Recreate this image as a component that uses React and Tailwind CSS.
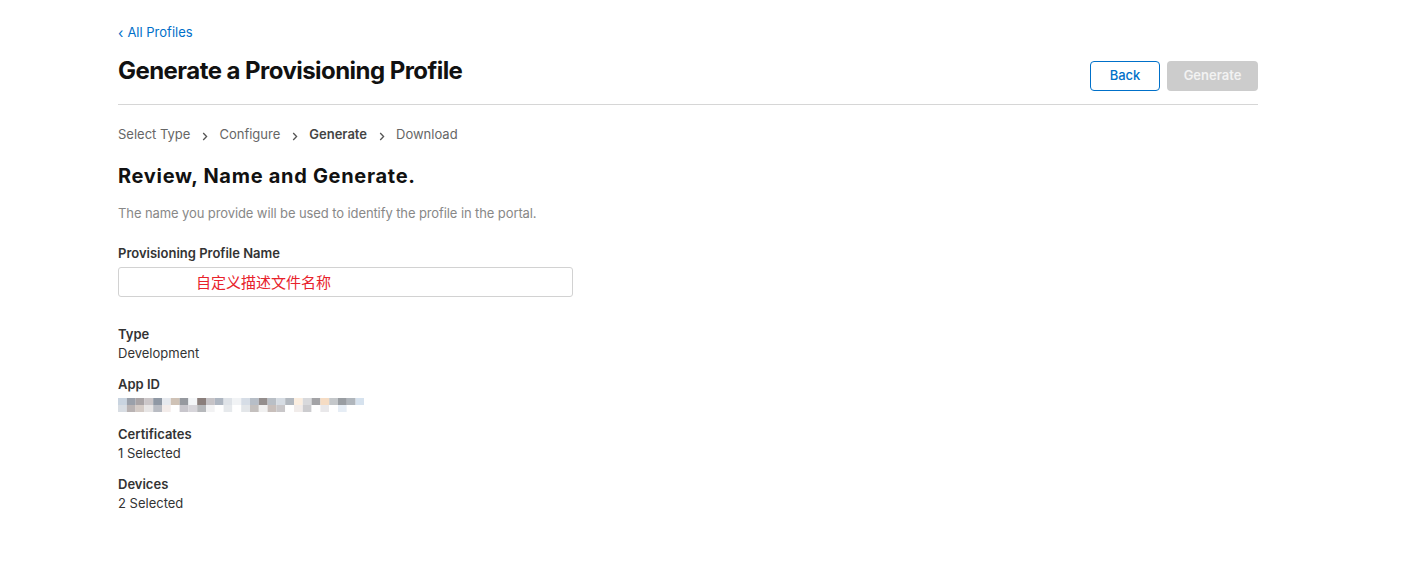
import React from 'react';

const FONT = { fontFamily: 'Inter, "Noto Sans CJK SC", sans-serif' };

// mosaic colours for the blurred App ID (two rows of cells)
const MOSAIC_TOP = ['#c9d4e0','#9aa0aa','#a9a4a6','#cbc6c8','#8f98a4','#e6e9ee','#cfc2b6','#96999f','#f4f6f8','#8a7e7b','#c6c3c6','#aeb6c1','#dfe3e8','#f1f3f5','#d6dde6','#b7bec7','#948e8d','#b9bfc6','#d6dce3','#b2b8bf','#fbeee0','#d8d9dc','#a3a3a6','#f5dcc4','#c4c7ca','#999da2','#b0b6bc','#d6e2ee'];
const MOSAIC_BOT = ['#d8dde3','#b9b3b3','#d4cbc6','#e7e5e5','#b9bcc3','#f3ecea','#ffffff','#c8c6cc','#d7d5da','#b6b8bb','#f2f2f3','#ffffff','#e6e9ec','#ffffff','#e3e6e9','#c4c0be','#f1f1f1','#c8bfbb','#c9c7c9','#ffffff','#f1ecea','#cccccf','#ffffff','#e9e8ea','#ffffff','#e6edf5','#ffffff','#ffffff'];

function Mosaic() {
  return (
    <svg width="246" height="14" viewBox="0 0 246 14" className="block">
      {MOSAIC_TOP.map((c, i) => (
        <rect key={'t' + i} x={i * 8.8} y="0" width="8.8" height="7" fill={c} />
      ))}
      {MOSAIC_BOT.map((c, i) => (
        <rect key={'b' + i} x={i * 8.8} y="7" width="8.8" height="7" fill={c} />
      ))}
    </svg>
  );
}

function Chevron() {
  return (
    <svg width="6" height="9" viewBox="0 0 6 9" className="mx-[11.5px] mt-[3px]">
      <path d="M1.2 1 L4.6 4.5 L1.2 8" fill="none" stroke="#555" strokeWidth="1.3" />
    </svg>
  );
}

function Detail({ label, value }) {
  return (
    <div className="flex flex-col">
      <span className="text-[13px] leading-[19px] font-semibold text-[#333]">{label}</span>
      <span className="text-[13px] leading-[19px] text-[#333]">{value}</span>
    </div>
  );
}

export default function App() {
  const steps = ['Select Type', 'Configure', 'Generate', 'Download'];

  return (
    <div className="w-[1402px] h-[578px] bg-white overflow-hidden" style={FONT}>
      <div className="ml-[118px] w-[1140px] pt-[24px]">
        <a className="text-[13px] leading-[17px] text-[#0070c9] flex items-center gap-[4px]">
          <span className="text-[14px] leading-[17px]">‹</span>
          <span>All Profiles</span>
        </a>

        <div className="flex items-start justify-between mt-[16px] pb-[13px] border-b border-[#d6d6d6]">
          <h1 className="text-[24px] leading-[28px] font-bold text-[#111] tracking-[-0.55px]">
            Generate a Provisioning Profile
          </h1>
          <div className="flex gap-[7px] mt-[4px]">
            <button className="w-[70px] h-[30px] rounded-[4px] border border-[#0070c9] text-[#0070c9] text-[13px] font-medium bg-white">
              Back
            </button>
            <button className="w-[91px] h-[30px] rounded-[4px] bg-[#cccccc] text-[#f2f2f2] text-[13px] font-semibold">
              Generate
            </button>
          </div>
        </div>

        <div className="flex items-center mt-[20px] text-[13px] leading-[19px] text-[#666]">
          {steps.map((s, i) => (
            <React.Fragment key={s}>
              {i > 0 && <Chevron />}
              <span className={s === 'Generate' ? 'font-semibold text-[#444]' : ''}>{s}</span>
            </React.Fragment>
          ))}
        </div>

        <h2 className="mt-[19px] text-[20px] leading-[26px] font-bold text-[#111] tracking-[0.7px]">
          Review, Name and Generate.
        </h2>

        <p className="mt-[15px] text-[13px] leading-[19px] text-[#888] tracking-[-0.1px]">
          The name you provide will be used to identify the profile in the portal.
        </p>

        <div className="mt-[21px] text-[13px] leading-[19px] font-semibold text-[#333]">
          Provisioning Profile Name
        </div>
        <div className="mt-[4px] w-[455px] h-[30px] border border-[#d2d2d2] rounded-[3px] flex items-center pl-[77px]">
          <span className="text-[15px] text-[#e8222b]" style={{ fontFamily: '"Noto Sans CJK SC", sans-serif' }}>
            自定义描述文件名称
          </span>
        </div>

        <div className="mt-[28px] flex flex-col gap-[12px]">
          <Detail label="Type" value="Development" />
          <div className="flex flex-col">
            <span className="text-[13px] leading-[19px] font-semibold text-[#333]">App ID</span>
            <div className="mt-[2px] h-[17px] flex items-center">
              <Mosaic />
            </div>
          </div>
          <Detail label="Certificates" value="1 Selected" />
          <Detail label="Devices" value="2 Selected" />
        </div>
      </div>
    </div>
  );
}
